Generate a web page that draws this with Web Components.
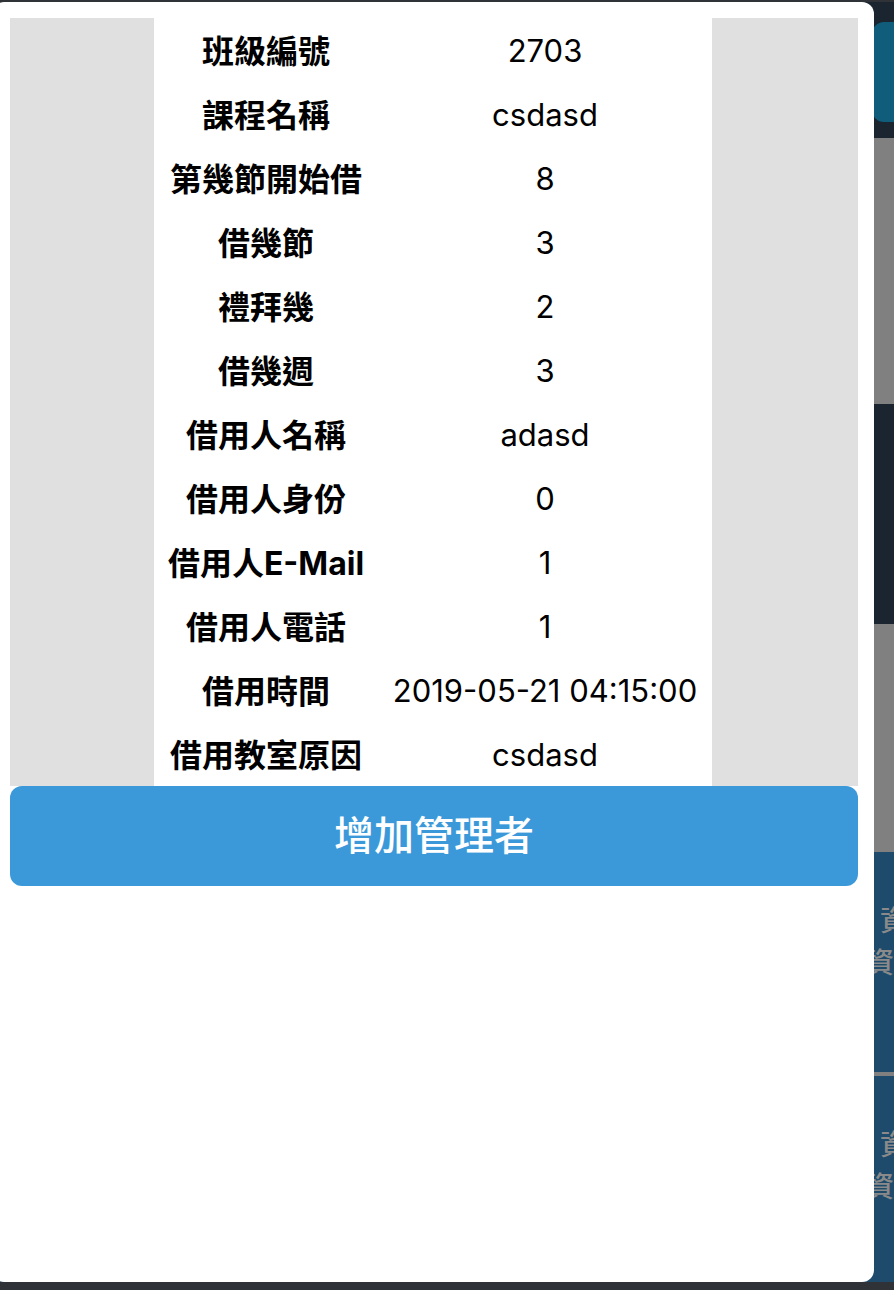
<!DOCTYPE html>
<html lang="zh-Hant">
<head>
<meta charset="utf-8">
<meta name="viewport" content="width=device-width, initial-scale=1">
<title>借用教室</title>
<style>
body { margin: 0; background: #2f3338; font-family: Inter, "Noto Sans CJK TC", sans-serif; }
</style>
</head>
<body>
<booking-app></booking-app>

<template id="app-template">
  <style>
    :host { display: grid; grid-template: minmax(0, 1fr) / minmax(0, 1fr); box-sizing: border-box; min-height: 100vh; padding: 2px 0 8px; overflow: hidden; background: #2f3338; }
    page-backdrop, booking-dialog { grid-area: 1 / 1; }
    booking-dialog { margin: 0 20px 0 -8px; z-index: 1; }
  </style>
  <page-backdrop></page-backdrop>
  <booking-dialog>
    <booking-table></booking-table>
    <submit-button>增加管理者</submit-button>
  </booking-dialog>
</template>

<template id="backdrop-template">
  <style>
    :host { display: flex; flex-direction: column; min-width: 0; overflow: hidden; background: #808080; }
    header { display: flex; flex: none; justify-content: flex-end; box-sizing: border-box; height: 136px; padding: 20px 0 16px; background: #1a252f; }
    .tab { width: 22px; border-radius: 12px 0 0 12px; background: #105d7b; }
    .band { flex: none; height: 220px; margin: 266px 0 228px; background: #1a252f; }
    .cards { display: flex; flex-direction: column; gap: 4px; flex: 1 0 0; min-height: 0; overflow: hidden; }
  </style>
  <header><div class="tab"></div></header>
  <div class="band"></div>
  <div class="cards"><info-card></info-card><info-card></info-card></div>
</template>

<template id="card-template">
  <style>
    :host { display: flex; flex: none; justify-content: flex-end; box-sizing: border-box; height: 220px; padding-top: 48px; background: #1e4b6b; color: #8a8a8a; font-size: 28px; font-weight: 500; line-height: 42px; overflow: hidden; }
    div { width: 28px; }
    p { margin: 0; white-space: nowrap; }
    p:first-child { padding-left: 14px; }
  </style>
  <div><p>資</p><p>資</p></div>
</template>

<template id="dialog-template">
  <style>
    :host { display: block; padding: 16px 16px 16px 18px; border-radius: 12px; background: #fff; }
  </style>
  <slot></slot>
</template>

<template id="table-template">
  <style>
    :host { display: block; padding-right: 2px; background: #e0e0e0; }
    table { margin: 0 auto; border-collapse: collapse; background: #fff; color: #000; text-align: center; white-space: nowrap; }
    th, td { box-sizing: border-box; height: 64px; padding: 2px 0 0; line-height: 48px; }
    th { width: 224px; padding-top: 4px; font-size: 32px; font-weight: 700; }
    td { width: 334px; font-size: 31px; }
  </style>
  <table><tbody></tbody></table>
</template>

<template id="button-template">
  <style>
    button { display: block; width: 100%; padding: 20px; border: 0; border-radius: 12px; background: #3b99d9; color: #fff; font: inherit; font-size: 40px; font-weight: 500; line-height: 60px; }
  </style>
  <button type="button"><slot></slot></button>
</template>

<script>
class TemplateElement extends HTMLElement {
  constructor() {
    super();
    const template = document.getElementById(this.constructor.template);
    this.attachShadow({ mode: "open" }).append(template.content.cloneNode(true));
  }
}

class InfoCard extends TemplateElement { static template = "card-template"; }
class PageBackdrop extends TemplateElement { static template = "backdrop-template"; }
class BookingDialog extends TemplateElement { static template = "dialog-template"; }
class SubmitButton extends TemplateElement { static template = "button-template"; }

class BookingTable extends TemplateElement {
  static template = "table-template";
  static rows = [
    ["班級編號", "2703"],
    ["課程名稱", "csdasd"],
    ["第幾節開始借", "8"],
    ["借幾節", "3"],
    ["禮拜幾", "2"],
    ["借幾週", "3"],
    ["借用人名稱", "adasd"],
    ["借用人身份", "0"],
    ["借用人E-Mail", "1"],
    ["借用人電話", "1"],
    ["借用時間", "2019-05-21 04:15:00"],
    ["借用教室原因", "csdasd"]
  ];
  constructor() {
    super();
    const body = this.shadowRoot.querySelector("tbody");
    for (const [label, value] of BookingTable.rows) {
      const row = body.insertRow();
      const head = document.createElement("th");
      head.scope = "row";
      head.textContent = label;
      row.append(head);
      row.insertCell().textContent = value;
    }
  }
}

class BookingApp extends TemplateElement { static template = "app-template"; }

customElements.define("info-card", InfoCard);
customElements.define("page-backdrop", PageBackdrop);
customElements.define("booking-table", BookingTable);
customElements.define("submit-button", SubmitButton);
customElements.define("booking-dialog", BookingDialog);
customElements.define("booking-app", BookingApp);
</script>
</body>
</html>
